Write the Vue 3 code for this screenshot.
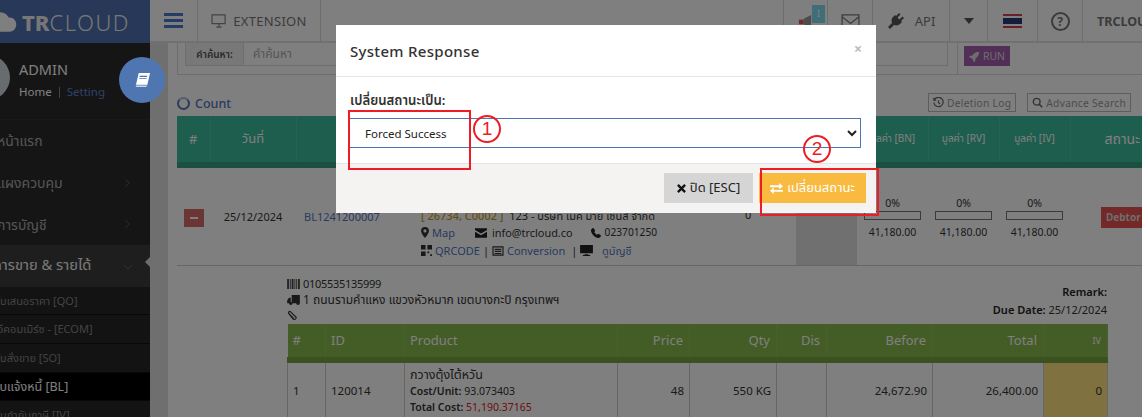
<script setup>
const nav = [
  { label: 'หน้าแรก', cls: 'n1' },
  { label: 'แผงควบคุม', cls: 'n2', chev: true },
  { label: 'การบัญชี', cls: 'n3', chev: true },
]
const sub = [
  { label: 'ใบเสนอราคา [QO]' },
  { label: 'อีคอมเมิร์ซ - [ECOM]' },
  { label: 'ใบสั่งขาย [SO]' },
  { label: 'ใบแจ้งหนี้ [BL]', active: true },
  { label: 'ใบกำกับภาษี [IV]' },
]
const progress = [1, 2, 3]
</script>

<template>
  <div class="app">
    <aside class="side">
      <div class="logo">
        <svg class="cloud" viewBox="0 0 40 28"><path fill="#fff" d="M8 27C3 27 0 23 0 19c0-4 3-7 6-8C7 5 12 1 18 1c5 0 9 3 11 7 5-1 10 3 10 9 0 6-4 10-9 10z"/></svg>
        <span class="brand"><b>TR</b>CLOUD</span>
      </div>
      <div class="profile">
        <div class="avatar"></div>
        <div class="who">
          <div class="name">ADMIN</div>
          <div class="links"><span>Home</span><i></i><span class="blue">Setting</span></div>
        </div>
      </div>
      <nav class="nav">
        <div v-for="n in nav" :key="n.label" class="nav-item">
          <span>{{ n.label }}</span>
          <svg v-if="n.chev" class="chev" viewBox="0 0 8 12"><path d="M2 1l5 5-5 5" fill="none" stroke="#666" stroke-width="1.100"/></svg>
        </div>
        <div class="nav-item open">
          <span>การขาย &amp; รายได้</span>
          <svg class="chev" viewBox="0 0 12 8"><path d="M1 2l5 5 5-5" fill="none" stroke="#666" stroke-width="1.100"/></svg>
          <em class="notch"></em>
        </div>
        <div v-for="s in sub" :key="s.label" class="sub-item" :class="{ on: s.active }">{{ s.label }}</div>
      </nav>
    </aside>

    <main class="main">
      <header class="top">
        <div class="cell burger"><svg viewBox="0 0 20 16" width="20" height="16"><path fill="#4c78c8" d="M0 0h19v3H0zM0 6h19v3H0zM0 12h19v3H0z"/></svg></div>
        <div class="cell ext">
          <svg viewBox="0 0 18 16" width="16" height="14"><path fill="none" stroke="#888" stroke-width="1.400" d="M1 1h15v10H1zM6 15h6M9 11v4"/></svg>
          <span>EXTENSION</span>
        </div>
        <div class="grow"></div>
        <div class="cell mega">
          <svg viewBox="0 0 16 16" width="15" height="15"><path fill="#e25555" d="M1 6h5v5H1z"/><path fill="#999" d="M6 5l8-4v14l-8-4z"/></svg>
          <span class="badge">I</span>
        </div>
        <div class="cell mail"><svg viewBox="0 0 20 16" width="19" height="15"><path fill="none" stroke="#777" stroke-width="1.300" d="M1 1h18v14H1zM1 3l9 7 9-7"/></svg></div>
        <div class="cell api">
          <svg viewBox="0 0 18 18" width="18" height="18"><path fill="#555" d="M12 1l1.500 1.500-3 3 2 2 3-3L17 6l-3 3 1 1-1.500 1.500C12 13.500 9 14 7 13l-4 4-2-2 4-4C4 9 4.500 6 6.500 4.500L8 3l1 1z"/></svg>
          <span>API</span>
        </div>
        <div class="cell caret"><em></em></div>
        <div class="cell flagc"><div class="flag"></div></div>
        <div class="cell help"><span>?</span></div>
        <div class="cell co">TRCLOUD</div>
      </header>

      <div class="body">
        <div class="gutter"></div>
        <div class="content">
          <section class="search">
            <div class="group">
              <label>คำค้นหา:</label>
              <div class="field">คำค้นหา</div>
            </div>
            <div class="runbox">
              <button class="run">
                <svg viewBox="0 0 14 14" width="11" height="11"><path fill="#ddd" d="M13 1C9 1 6 3 4 6H1L0 8l3 1 2 2 1 3 2-1v-3c3-2 5-5 5-10z"/></svg>
                RUN
              </button>
            </div>
          </section>

          <div class="countrow">
            <div class="count"><em class="ring"></em>Count</div>
            <div class="tools">
              <button>
                <svg viewBox="0 0 14 14" width="11" height="11"><path fill="none" stroke="#666" stroke-width="1.500" d="M2 3a6 6 0 1 1-1 4M7 4v3l2 2M1 1v3h3"/></svg>
                Deletion Log
              </button>
              <button>
                <svg viewBox="0 0 14 14" width="11" height="11"><circle cx="6" cy="6" r="4.300" fill="none" stroke="#666" stroke-width="1.800"/><path stroke="#666" stroke-width="2" d="M9 9l4 4"/></svg>
                Advance Search
              </button>
            </div>
          </div>

          <table class="t1">
            <colgroup>
              <col style="width:33px" /><col style="width:86px" /><col style="width:117px" /><col style="width:290px" />
              <col style="width:93px" /><col style="width:61px" /><col style="width:71px" /><col style="width:71px" />
              <col style="width:71px" /><col style="width:72px" />
            </colgroup>
            <thead>
              <tr>
                <th class="big">#</th><th class="big">วันที่</th><th></th><th></th><th></th><th></th>
                <th>มูลค่า [BN]</th><th>มูลค่า [RV]</th><th>มูลค่า [IV]</th><th class="big status">สถานะ</th>
              </tr>
            </thead>
            <tbody>
              <tr>
                <td class="c"><span class="minus"></span></td>
                <td class="c date">25/12/2024</td>
                <td class="code">BL1241200007</td>
                <td class="cust">
                  <div><span class="gold">[ 26734, C0002 ]</span>&nbsp; 123 - บริษัท เมค มาย เซนส์ จำกัด</div>
                  <div class="l2">
                    <svg viewBox="0 0 10 14" width="8" height="11"><path fill="#333" fill-rule="evenodd" d="M5 0a5 5 0 0 0-5 5c0 3 5 9 5 9s5-6 5-9a5 5 0 0 0-5-5zm0 3a2 2 0 1 1 0 4 2 2 0 0 1 0-4z"/></svg>
                    <a>Map</a>
                    <svg class="g1" viewBox="0 0 14 11" width="12" height="10"><path fill="#222" d="M0 0h14v2L7 6 0 2zM0 4l7 4 7-4v7H0z"/></svg>
                    <span class="mail-t">info@trcloud.co</span>
                    <svg class="g2" viewBox="0 0 12 12" width="10" height="10"><path fill="#222" d="M3 0l2 3-1 2c1 1.500 2 2.500 3 3l2-1 3 2c0 2-2 3-3 3C5 12 0 7 0 3c0-1 1-3 3-3z"/></svg>
                    <span class="tel">023701250</span>
                  </div>
                  <div class="l3">
                    <svg viewBox="0 0 12 12" width="11" height="11"><path fill="#333" d="M0 0h5v5H0zM7 0h5v5H7zM0 7h5v5H0zM7 7h2v2H7zM10 10h2v2h-2z"/></svg>
                    <a>QRCODE</a> |
                    <svg viewBox="0 0 14 12" width="12" height="10"><path fill="none" stroke="#333" stroke-width="1.400" d="M1 1h12v10H1zM3 4h8M3 6.500h8M3 9h8"/></svg>
                    <a>Conversion</a> &nbsp;|
                    <svg viewBox="0 0 14 12" width="13" height="11"><path fill="#222" d="M0 0h14v9H0zM5 10h4v1h2v1H3v-1h2z"/></svg>
                    &nbsp;<a>ดูบัญชี</a>
                  </div>
                </td>
                <td class="zero">0</td>
                <td class="shade"></td>
                <td v-for="p in progress" :key="p" class="prog">
                  <div>0%</div>
                  <div class="bar"></div>
                  <div>41,180.00</div>
                </td>
                <td class="st"><span class="debtor">Debtor</span></td>
              </tr>
            </tbody>
          </table>

          <section class="detail">
            <div class="dhead">
              <div>
                <div class="dl tax">
                  <svg viewBox="0 0 14 11" width="13" height="10"><path fill="#444" d="M0 0h2v11H0zM3 0h1v11H3zM5 0h2v11H5zM8 0h1v11H8zM10 0h1v11h-1zM12 0h2v11h-2z"/></svg>
                  0105535135999
                </div>
                <div class="dl addr">
                  <svg viewBox="0 0 14 11" width="13" height="10"><path fill="#333" d="M5 0h9v8H5zM4 3H2L0 6v3h2a2 2 0 0 0 4 0h4a2 2 0 0 0 4 0V8H4z"/></svg>
                  1 ถนนรามคำแหง แขวงหัวหมาก เขตบางกะปิ กรุงเทพฯ
                </div>
                <div class="dl">
                  <svg viewBox="0 0 12 12" width="11" height="11"><path fill="none" stroke="#333" stroke-width="1.300" d="M2 4l5 6a2 2 0 0 0 3-2L4 2a1.300 1.300 0 0 0-2 2l5 5"/></svg>
                </div>
              </div>
              <div class="dright">
                <div><b>Remark:</b></div>
                <div><b>Due Date:</b> 25/12/2024</div>
              </div>
            </div>
            <table class="t2">
              <colgroup>
                <col style="width:38px" /><col style="width:79px" /><col style="width:213px" /><col style="width:72px" />
                <col style="width:87px" /><col style="width:50px" /><col style="width:106px" /><col style="width:111px" /><col style="width:64px" />
              </colgroup>
              <thead>
                <tr>
                  <th class="l">#</th><th class="l">ID</th><th class="l">Product</th><th>Price</th><th>Qty</th><th>Dis</th><th>Before</th><th>Total</th><th class="iv">IV</th>
                </tr>
              </thead>
              <tbody>
                <tr>
                  <td class="l">1</td>
                  <td class="l">120014</td>
                  <td class="l prod">
                    <div class="pname">กวางตุ้งไต้หวัน</div>
                    <div><b>Cost/Unit:</b> 93.073403</div>
                    <div><b>Total Cost:</b> <span class="red">51,190.37165</span></div>
                  </td>
                  <td>48</td><td>550 KG</td><td></td><td>24,672.90</td><td>26,400.00</td><td class="ivc">0</td>
                </tr>
              </tbody>
            </table>
          </section>
        </div>
      </div>
    </main>

    <div class="overlay"></div>

    <button class="fab">
      <svg viewBox="0 0 18 18" width="17" height="17"><path fill="#fff" d="M5 1h12l-3 13H2z"/><path fill="#4f76b0" d="M6 4h8l-.3 1.300H5.700zM5.500 6.500h8l-.3 1H5.300z"/><path fill="#fff" stroke="#4f76b0" stroke-width=".8" d="M2 14h12l-.4 2H1.600z"/></svg>
    </button>

    <div class="modal">
      <div class="m-head">
        <h4>System Response</h4>
        <span class="x">×</span>
      </div>
      <div class="m-body">
        <label>เปลี่ยนสถานะเป็น:</label>
        <select>
          <option>Forced Success</option>
        </select>
      </div>
      <div class="m-foot">
        <button class="close">
          <svg viewBox="0 0 10 10" width="9" height="9"><path stroke="#111" stroke-width="2.600" d="M1 1l8 8M9 1l-8 8"/></svg>
          ปิด [ESC]
        </button>
        <button class="go">
          <svg viewBox="0 0 14 12" width="13" height="11"><path fill="#fff" d="M0 2.500h10V0l4 3.500-4 3.500V4.500H0zM14 7.500H4V5L0 8.500 4 12V9.500h10z"/></svg>
          เปลี่ยนสถานะ
        </button>
      </div>
    </div>

    <div class="mark r1"></div>
    <div class="mark r2"></div>
    <div class="num n-1">1</div>
    <div class="num n-2">2</div>
  </div>
</template>

<style>
html, body { margin: 0; background: #fff; }
</style>

<style scoped>
.app {
  position: relative;
  width: 1142px;
  height: 417px;
  overflow: hidden;
  display: flex;
  font-family: "Noto Sans", "Noto Sans Thai", "Liberation Sans", sans-serif;
  font-size: 11.500px;
  color: #444;
  background: #fff;
}
button { font-family: inherit; cursor: default; }

/* sidebar */
.side { width: 150px; flex: none; background: #2a2a2a; overflow: hidden; }
.logo { height: 43px; background: #4f70b0; display: flex; align-items: center; gap: 5px; }
.cloud { width: 30px; height: 22px; flex: none; margin-left: -13px; }
.brand { color: #eee; font-size: 22px; font-weight: 300; letter-spacing: 1.500px; }
.brand b { font-weight: 800; letter-spacing: 0; }
.profile { height: 76px; display: flex; gap: 9px; border-bottom: 1px solid #333; }
.avatar { width: 45px; height: 45px; margin: 12px 0 0 -35px; border-radius: 50%; background: #cfd9dc; flex: none; }
.who { padding-top: 15px; }
.name { font-size: 14.500px; color: #fff; line-height: 22px; }
.links { display: flex; align-items: center; gap: 7px; color: #fff; font-size: 11.500px; line-height: 24px; }
.links i { width: 1px; height: 11px; background: #888; }
.blue { color: #5d84d0; }
.nav-item { position: relative; height: 41.670px; box-sizing: border-box; padding-top: 2px; display: flex; align-items: center; margin-left: -3px; font-size: 14px; color: #aaa; }
.nav-item.open { margin: 0; padding-top: 0; background: #3c3c3c; color: #f4f4f4; text-indent: -7px; font-size: 14.700px; }
.chev { position: absolute; left: 127px; top: 16px; width: 6px; height: 10px; }
.open .chev { left: 123px; top: 18px; width: 10px; height: 7px; }
.notch { position: absolute; right: 0; top: 12px; border: 5px solid transparent; border-right: 5px solid #ddd; border-left: 0; }
.sub-item { height: 28.700px; line-height: 27.700px; box-sizing: border-box; border-bottom: 1px solid #111; background: #262626; color: #888; font-size: 11px; text-indent: -3px; }
.sub-item.on { background: #000; color: #fff; font-size: 12.500px; text-indent: -4px; }

/* topbar */
.main { flex: 1; min-width: 0; overflow: hidden; }
.top { height: 43px; display: flex; box-sizing: border-box; border-bottom: 2px solid #e2e2e2; background: #fff; }
.grow { flex: 1; }
.cell { display: flex; align-items: center; justify-content: center; border-right: 1px solid #ddd; height: 42px; box-sizing: border-box; color: #777; font-size: 13px; }
.burger { width: 48px; }
.ext { width: 123px; gap: 6px; letter-spacing: .3px; }
.mega { width: 45px; position: relative; border-left: 1px solid #ddd; justify-content: flex-start; padding-left: 14px; }
.badge { position: absolute; left: 28px; top: 5px; width: 13px; height: 18px; background: #7edcf0; color: #fff; text-align: center; font-size: 9px; line-height: 18px; }
.mail { width: 45px; }
.api { width: 77px; gap: 10px; }
.caret { width: 38px; }
.caret em { border: 5px solid transparent; border-top: 6px solid #555; border-bottom: 0; }
.flagc { width: 50px; }
.flag { width: 19px; height: 14px; background: linear-gradient(#c8454d 0 15%, #fff 15% 30%, #2a3b7a 30% 70%, #fff 70% 85%, #c8454d 85%); }
.help { width: 45px; }
.help span { width: 19px; height: 19px; box-sizing: border-box; border: 2px solid #777; border-radius: 50%; display: flex; align-items: center; justify-content: center; font-weight: 700; font-size: 12px; }
.co { width: 59px; border: 0; justify-content: flex-start; padding-left: 14px; font-weight: 700; font-size: 12.500px; white-space: nowrap; }

.body { display: flex; height: 374px; overflow: hidden; }
.gutter { width: 18px; flex: none; background: #dedede; }
.content { flex: 1; min-width: 0; }

/* search */
.search { height: 31px; margin-left: 9px; display: flex; border-left: 1px solid #ddd; border-bottom: 1px solid #ddd; }
.group { width: 763px; margin-left: 7px; height: 23px; display: flex; border: 1px solid #ddd; border-top: 0; box-sizing: border-box; }
.group label { width: 58px; flex: none; box-sizing: border-box; background: #f1f1f1; border-right: 1px solid #ddd; color: #555; font-size: 10px; font-weight: 600; text-align: center; line-height: 22px; }
.field { padding-left: 9px; line-height: 21px; color: #aaa; font-size: 12px; }
.runbox { margin-left: 9px; padding: 3px 0 0 6px; border-left: 1px solid #ddd; }
.run { width: 46px; height: 20px; padding: 0; background: #a45fae; color: #ddd; border: 0; display: flex; align-items: center; justify-content: center; gap: 3px; font-size: 10.500px; }

/* count */
.countrow { height: 41px; display: flex; justify-content: space-between; align-items: flex-end; margin-left: 9px; padding-right: 11px; box-sizing: border-box; padding-bottom: 4px; }
.count { display: flex; align-items: center; gap: 5px; color: #5276be; font-size: 12.500px; font-weight: 500; }
.ring { display: block; width: 13px; height: 13px; box-sizing: border-box; border: 2px solid #5276be; border-top-color: #a7bbe0; border-radius: 50%; }
.tools { display: flex; gap: 11px; }
.tools button { height: 19px; background: transparent; border: 1px solid #bbb; color: #999; font-size: 10.200px; letter-spacing: .3px; padding: 0 4px; display: flex; align-items: center; gap: 3px; white-space: nowrap; }

/* table 1 */
.t1 { table-layout: fixed; width: 965px; margin-left: 9px; border-collapse: collapse; }
.t1 th { height: 46px; padding: 0; background: #3cbc9c; color: #fff; font-weight: 400; font-size: 10px; border-right: 1px solid #4cc4a6; border-bottom: 6px solid #369f83; vertical-align: middle; white-space: nowrap; }
.t1 th.big { font-size: 13px; }
.t1 th.status { text-align: left; padding-left: 34px; font-size: 14px; }
.t1 td { height: 100px; padding: 0; border-bottom: 1px solid #ccc; vertical-align: top; color: #333; font-size: 11px; box-sizing: border-box; }
.c { text-align: center; }
.minus { display: block; width: 20px; height: 18px; margin: 41px 0 0 7px; background: #d96a6a linear-gradient(#fff, #fff) center / 8px 2px no-repeat; }
.t1 td.date { padding-top: 41px; }
.t1 td.code { padding: 41px 0 0 8px; color: #5276be; }
.t1 td.cust { padding: 39px 0 0 8px; white-space: nowrap; line-height: 17px; }
.gold { color: #c89b2a; font-weight: 500; }
.cust a { color: #5276be; }
.l2 { display: flex; align-items: center; gap: 3px; }
.g1 { margin-left: 17px; }
.mail-t { margin-left: 2px; font-size: 10.900px; }
.g2 { margin-left: 15px; }
.tel { font-size: 10.200px; margin-left: 1px; }
.l3 { display: flex; align-items: center; gap: 3px; margin-top: 1px; }
.t1 td.zero { padding: 39px 0 0 42px; }
.t1 td.shade { background: #e0e0e0; }
.t1 td.prog { padding-top: 28px; text-align: center; font-size: 10.500px; line-height: 14px; }
.bar { width: 55px; height: 7px; margin: 1px auto 5px; border: 1px solid #777; }
.t1 td.st { padding-top: 39px; padding-left: 31px; overflow: visible; white-space: nowrap; }
.debtor { display: inline-block; width: 60px; height: 21px; line-height: 21px; padding-left: 5px; box-sizing: border-box; background: #e85050; color: #ddd; font-weight: 700; font-size: 10px; }

/* detail */
.detail { margin: 0 35px 0 119px; }
.dhead { height: 58px; display: flex; justify-content: space-between; padding-top: 10px; box-sizing: border-box; font-size: 11px; color: #333; }
.dl { display: flex; align-items: center; gap: 3px; height: 16px; }
.tax { letter-spacing: -.3px; }
.addr { font-size: 12px; }
.dright { text-align: right; padding-top: 7px; line-height: 18px; }
.dright b { font-weight: 600; color: #222; }
.t2 { table-layout: fixed; width: 820px; border-collapse: collapse; }
.t2 th { height: 33px; padding: 0 6px; background: #88b84a; color: #fff; font-weight: 400; font-size: 13px; border-right: 1px solid #94c058; border-bottom: 6px solid #76a440; text-align: right; }
.t2 th.iv { font-size: 9px; }
.t2 .l { text-align: left; padding-left: 5px; }
.t2 td { height: 56px; padding: 0 5px 2px; border-right: 1px solid #ccc; border-left: 1px solid #ccc; text-align: right; color: #333; font-size: 11.500px; white-space: nowrap; }
.t2 td.prod { line-height: 16px; font-size: 10.500px; padding-left: 5px; }
.pname { font-size: 12.500px; }
.prod b { font-weight: 600; }
.red { color: #e02020; }
.t2 td.ivc { background: #ffe480; }

/* overlay & modal */
.overlay { position: absolute; inset: 0; background: rgba(0, 0, 0, .5); }
.fab { position: absolute; left: 119px; top: 57px; width: 46px; height: 46px; padding: 0; border: 0; border-radius: 50%; background: #4f76b0; display: flex; align-items: center; justify-content: center; }
.modal { position: absolute; left: 336px; top: 25px; width: 540px; height: 188px; background: #fff; display: flex; flex-direction: column; }
.m-head { height: 52px; display: flex; align-items: center; justify-content: space-between; padding: 0 14px; border-bottom: 1px solid #e5e5e5; box-sizing: border-box; }
.m-head h4 { margin: 0; font-size: 15px; font-weight: 500; color: #333; letter-spacing: .3px; }
.x { color: #bbb; font-size: 14px; font-weight: 700; margin-top: -4px; }
.m-body { height: 86px; padding: 14px 15px 0 13px; box-sizing: border-box; display: flex; flex-direction: column; }
.m-body label { font-size: 13.200px; font-weight: 600; color: #333; line-height: 18px; margin: 0 0 9px 1px; }
.m-body select { height: 30px; width: 100%; padding: 0 11px; background: #fff; border: 1px solid #4f76b0; border-radius: 0; font-family: inherit; font-size: 11.500px; color: #222; outline: 0; }
.m-foot { flex: 1; background: #f4f3f1; border-top: 1px solid #e5e5e5; display: flex; justify-content: flex-end; align-items: flex-start; gap: 6px; padding: 9px 10px 0 0; }
.m-foot button { height: 30px; border: 0; padding: 0; display: flex; align-items: center; justify-content: center; gap: 4px; font-size: 13px; }
.close { width: 89px; background: #d5d5d5; color: #222; }
.go { width: 107px; background: #f8bb40; color: #fff; }

.mark { position: absolute; box-sizing: border-box; border: 2px solid #ee1c25; }
.r1 { left: 348px; top: 110px; width: 123px; height: 60px; }
.r2 { left: 760px; top: 168px; width: 119px; height: 48px; }
.num { position: absolute; width: 28px; height: 28px; box-sizing: border-box; border: 2px solid #ee1c25; border-radius: 50%; color: #ee1c25; font-size: 19px; line-height: 23px; text-align: center; font-family: "Liberation Sans", sans-serif; }
.n-1 { left: 473px; top: 115px; }
.n-2 { left: 803px; top: 135px; }
</style>
